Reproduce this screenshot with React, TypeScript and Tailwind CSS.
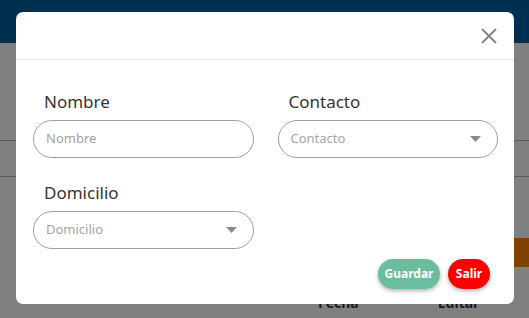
import React from "react";

function Chevron() {
  return (
    <svg width="11" height="6" viewBox="0 0 11 6" className="shrink-0">
      <path d="M0 0 L11 0 L5.5 6 Z" fill="#8a8a8a" />
    </svg>
  );
}

function Field({ label, placeholder, select }: { label: string; placeholder: string; select?: boolean }) {
  return (
    <div className="flex flex-col">
      <div className="text-[17px] leading-[24px] text-[#333] pl-[11px]">{label}</div>
      <div className="mt-[6px] h-[38px] rounded-full border border-[#a0a0a0] flex items-center pl-[12px] pr-[16px] justify-between">
        <span className={`text-[13px] ${select ? "text-[#a3a3ab]" : "text-[#a0a0a0]"}`}>{placeholder}</span>
        {select && <Chevron />}
      </div>
    </div>
  );
}

export default function App() {
  return (
    <div className="relative w-[529px] h-[318px] overflow-hidden bg-[#808080]" style={{ fontFamily: '"Noto Sans", sans-serif' }}>
      {/* background page */}
      <div className="h-[43px] bg-[#003050]" />
      <div className="h-[97px]" />
      <div className="h-px bg-[#5c5c5c]" />
      <div className="h-[35px]" />
      <div className="h-px bg-[#5c5c5c]" />
      <div className="h-[61px]" />
      <div className="flex justify-end">
        <div className="w-[15px] h-[29px] bg-[#7f4000]" />
      </div>
      <div className="mt-[25px] flex text-[14px] font-bold text-[#1a1a1a]">
        <div className="ml-[318px]">Fecha</div>
        <div className="ml-[79px]">Editar</div>
      </div>

      {/* modal */}
      <div className="absolute left-[16px] top-[12px] w-[498px] h-[292px] bg-white rounded-[7px] flex flex-col">
        <div className="h-[48px] border-b border-[#e2e2e2] flex items-center justify-end pr-[17px]">
          <svg width="16" height="16" viewBox="0 0 16 16" className="mt-[1px]">
            <path d="M1 1 L15 15 M15 1 L1 15" stroke="#848484" strokeWidth="2" />
          </svg>
        </div>
        <div className="pl-[17px] pr-[16px] pt-[30px] grid grid-cols-2 gap-x-[24px] gap-y-[23px]">
          <Field label="Nombre" placeholder="Nombre" />
          <Field label="Contacto" placeholder="Contacto" select />
          <Field label="Domicilio" placeholder="Domicilio" select />
        </div>
        <div className="mt-[10px] flex justify-end gap-[8px] pr-[24px]">
          <button className="h-[30px] w-[62px] rounded-full bg-[#6bbd9d] text-white text-[12px] font-bold shadow-[0_2px_4px_rgba(0,0,0,0.3)]">
            Guardar
          </button>
          <button className="h-[30px] w-[42px] rounded-full bg-[#ff0000] text-white text-[12px] font-bold shadow-[0_2px_4px_rgba(0,0,0,0.3)]">
            Salir
          </button>
        </div>
      </div>
    </div>
  );
}
